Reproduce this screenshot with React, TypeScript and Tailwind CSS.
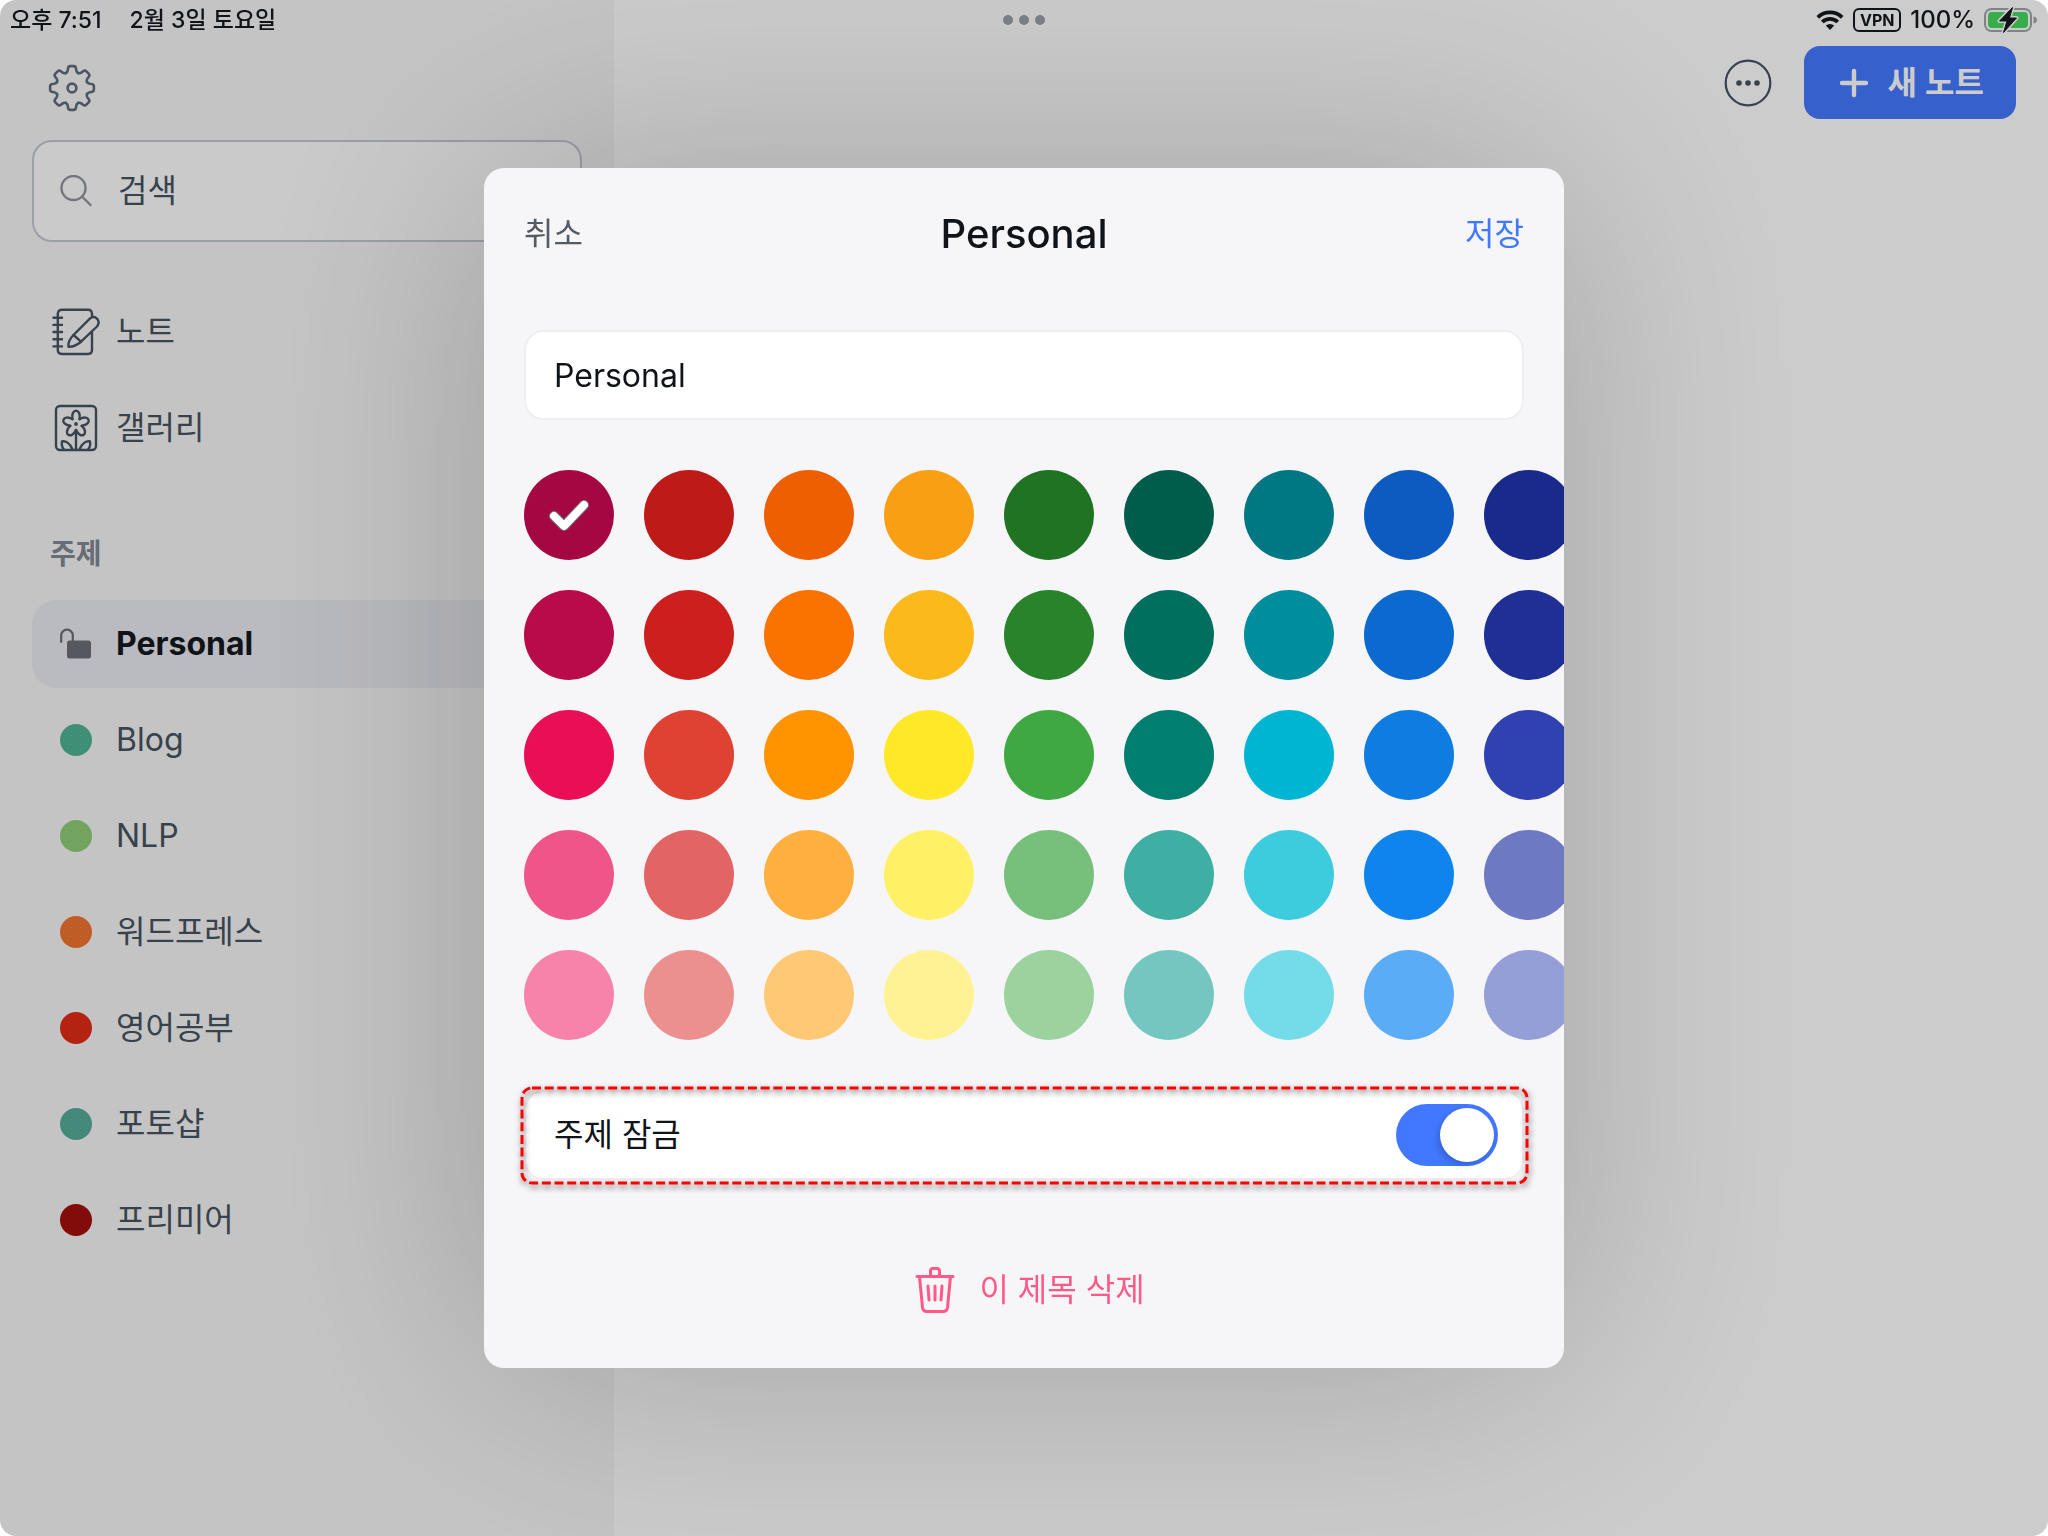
import { useState } from "react";

const swatches = [
  "bg-[#a50743]", "bg-[#bd1a18]", "bg-[#ed5f00]", "bg-[#f99f14]", "bg-[#1f7322]", "bg-[#005d4c]", "bg-[#007883]", "bg-[#0d5bc0]", "bg-[#1a2a8c]",
  "bg-[#b90a49]", "bg-[#cd1f1d]", "bg-[#f87300]", "bg-[#fbb91c]", "bg-[#28832a]", "bg-[#006f5e]", "bg-[#008d9e]", "bg-[#0b69cf]", "bg-[#1f2f95]",
  "bg-[#e80f56]", "bg-[#df4132]", "bg-[#ff9300]", "bg-[#ffe828]", "bg-[#3fa843]", "bg-[#007f70]", "bg-[#00b5d2]", "bg-[#0f7ce2]", "bg-[#3042af]",
  "bg-[#f0558a]", "bg-[#e26465]", "bg-[#ffb03f]", "bg-[#fff066]", "bg-[#77c07b]", "bg-[#3fafa3]", "bg-[#3dcbde]", "bg-[#1084ee]", "bg-[#6d7ac3]",
  "bg-[#f783aa]", "bg-[#ec908f]", "bg-[#ffc874]", "bg-[#fff293]", "bg-[#9bd29e]", "bg-[#74c7c0]", "bg-[#73dce8]", "bg-[#5aacf7]", "bg-[#949fd7]",
];

const topics = [
  { name: "Blog", dot: "bg-[#4fb394]" },
  { name: "NLP", dot: "bg-[#8fcd77]" },
  { name: "워드프레스", dot: "bg-[#f07330]" },
  { name: "영어공부", dot: "bg-[#e22c16]" },
  { name: "포토샵", dot: "bg-[#56ab98]" },
  { name: "프리미어", dot: "bg-[#a3100c]" },
];

function GearIcon() {
  return (
    <svg className="w-12 h-12" viewBox="-24 -24 48 48" fill="none" stroke="currentColor" strokeWidth="2.6" strokeLinecap="round">
      {[0, 45, 90, 135, 180, 225, 270, 315].map((a) => (
        <path
          key={a}
          transform={`rotate(${a})`}
          d="M-6.2 -14.9C-4.8 -15.6 -4.4 -16.6 -4.2 -17.9L-4 -19.6Q-3.7 -21.9 -1.6 -21.9H1.6Q3.7 -21.9 4 -19.6L4.2 -17.9C4.4 -16.6 4.8 -15.6 6.2 -14.9"
        />
      ))}
      <circle r="4.4" />
    </svg>
  );
}

function NoteIcon() {
  return (
    <svg className="w-12 h-12" viewBox="0 0 48 48" fill="none" stroke="currentColor" strokeWidth="2.4" strokeLinecap="round" strokeLinejoin="round">
      <path d="M40 8.5V6Q40 1.8 36 1.8H10Q5.8 1.8 5.8 6V42Q5.8 46 10 46H36Q40 46 40 42V24.5" />
      <path d="M1.5 9.7H10M1.5 16.9H10M1.5 24H10M1.5 31.2H10M1.5 38.4H10" />
      <path d="M21.5 27L37.8 10.6Q41.8 7.3 45.2 10.8Q48.2 14.7 45 18.5L29 33.7Z" />
      <path d="M21.5 27C18 30.5 16 35 16.5 38.7C20 39 25 37 29 33.7" />
    </svg>
  );
}

function GalleryIcon() {
  return (
    <svg className="w-12 h-12" viewBox="0 0 48 48" fill="none" stroke="currentColor" strokeWidth="2.4" strokeLinecap="round" strokeLinejoin="round">
      <rect x="4" y="2" width="40" height="44" rx="4" />
      <g transform="translate(24 20)">
        {[0, 72, 144, 216, 288].map((a) => (
          <path key={a} transform={`rotate(${a})`} d="M-3.5 -4.9C-5.8 -16 5.8 -16 3.5 -4.9" />
        ))}
        <circle r="1.9" fill="currentColor" stroke="none" />
      </g>
      <path d="M24 26V45" />
      <path d="M20.5 45.5C18.5 39.5 13.5 36.5 10 37.5C9.4 41 10 43.5 12 45.5" />
      <path d="M27.5 45.5C29.5 39.5 34.5 36.5 38 37.5C38.6 41 38 43.5 36 45.5" />
    </svg>
  );
}

function UnlockIcon() {
  return (
    <svg className="w-8 h-8" viewBox="0 0 32 32" fill="none">
      <path d="M1.2 14V7.5a5.8 5.8 0 0 1 11.6 0V14" stroke="currentColor" strokeWidth="2.2" strokeLinecap="round" />
      <rect x="7" y="12.5" width="24" height="18" rx="2.5" fill="currentColor" />
    </svg>
  );
}

function TrashIcon() {
  return (
    <svg className="w-12 h-12" viewBox="0 0 48 48" fill="none" stroke="currentColor" strokeWidth="3" strokeLinecap="round" strokeLinejoin="round">
      <path d="M6 10.5H42" />
      <path d="M19.5 10.5V5Q19.5 2.500 22 2.500H26Q28.500 2.500 28.500 5V10.5" />
      <path d="M8.5 10.5L11.500 41.500Q12 45.500 16 45.500H32Q36 45.500 36.500 41.500L39.500 10.5" />
      <path d="M17 20L18 34M24 20V34M31 20L30 34" />
    </svg>
  );
}

function StatusBar() {
  return (
    <header className="fixed inset-x-0 top-0 z-20 grid grid-cols-3 items-center h-10 px-[10px] text-[#101418]">
      <div className="flex gap-7 text-[23px] font-medium">
        <span>오후 7:51</span>
        <span>2월 3일 토요일</span>
      </div>
      <div className="flex justify-center gap-[6px]">
        <span className="size-[10px] rounded-full bg-[#7b7f84]" />
        <span className="size-[10px] rounded-full bg-[#7b7f84]" />
        <span className="size-[10px] rounded-full bg-[#7b7f84]" />
      </div>
      <div className="flex items-center justify-end gap-[9px]">
        <svg className="w-7 h-5" viewBox="0 0 28 20" fill="none" stroke="currentColor" strokeWidth="3.8">
          <path d="M1.8 7.4A17.5 17.5 0 0 1 26.2 7.4" />
          <path d="M6.3 12A11 11 0 0 1 21.7 12" />
          <path d="M14 20L9.8 15.6A6 6 0 0 1 18.2 15.6Z" fill="currentColor" stroke="none" />
        </svg>
        <span className="flex items-center justify-center w-12 h-6 rounded-md border-2 border-current text-base font-bold">VPN</span>
        <span className="text-2xl font-medium">100%</span>
        <svg className="w-[54px] h-7" viewBox="0 0 54 28">
          <rect x="1" y="3" width="46" height="22" rx="6.5" fill="none" stroke="#808387" strokeWidth="2" />
          <rect x="4" y="6" width="40" height="16" rx="4" fill="#38ad4b" />
          <path d="M49.5 10.5Q53 11.5 53 14T49.5 17.5Z" fill="#808387" />
          <path d="M28.5 1.5L15.500 15H23L19.5 26.5L32.500 12H25.500Z" fill="#101418" stroke="#cbcbcb" strokeWidth="4" strokeLinejoin="round" />
          <path d="M28.5 1.5L15.500 15H23L19.5 26.5L32.500 12H25.500Z" fill="#101418" stroke="#101418" strokeWidth="1" strokeLinejoin="round" />
        </svg>
      </div>
    </header>
  );
}

function Sidebar() {
  return (
    <aside className="w-[30%] shrink-0 bg-[#f6f6f6] px-8 pt-16 text-[#475361] text-[32px]">
      <button aria-label="설정" className="block ml-4 text-[#616b78]">
        <GearIcon />
      </button>
      <label className="mt-7 flex items-center h-[102px] rounded-[20px] border-2 border-[#c3c8d0] bg-[#fdfdfd] pl-[26px]">
        <svg className="w-8 h-8 text-[#90959d]" viewBox="0 0 32 32" fill="none" stroke="currentColor" strokeWidth="2.4" strokeLinecap="round">
          <circle cx="13.5" cy="13" r="12" />
          <path d="M22 21.500L30.500 30" />
        </svg>
        <input type="search" aria-label="검색" placeholder="검색" className="ml-[26px] w-80 bg-transparent outline-none placeholder:text-[#475361]" />
      </label>
      <nav className="mt-[42px]">
        <a href="#notes" className="flex items-center h-24 gap-4 pl-5">
          <NoteIcon />노트
        </a>
        <a href="#gallery" className="flex items-center h-24 gap-4 pl-5">
          <GalleryIcon />갤러리
        </a>
      </nav>
      <h2 className="mt-[58px] pl-[18px] text-[28px] leading-10 font-bold text-[#828791]">주제</h2>
      <nav className="mt-[26px] flex flex-col gap-2">
        <a href="#personal" className="flex items-center h-[88px] gap-4 pl-5 rounded-3xl bg-[#e9eaf0] font-bold text-[#14181d]">
          <span className="flex w-12 justify-center text-[#6b7077]">
            <UnlockIcon />
          </span>
          Personal
        </a>
        {topics.map((t) => (
          <a key={t.name} href={`#${t.name}`} className="flex items-center h-[88px] gap-4 pl-5">
            <span className="flex w-12 justify-center">
              <span className={`size-8 rounded-full ${t.dot}`} />
            </span>
            {t.name}
          </a>
        ))}
      </nav>
    </aside>
  );
}

function TopicDialog() {
  const [name, setName] = useState("Personal");
  const [color, setColor] = useState(0);
  const [locked, setLocked] = useState(true);

  return (
    <div role="dialog" aria-label="Personal" className="w-[1080px] max-w-full overflow-hidden rounded-[20px] bg-[#f6f6f9] px-10 pt-[38px] pb-[54px] text-[32px] shadow-[0_0_280px_rgba(0,0,0,0.21)]">
      <div className="flex items-center justify-between h-14">
        <button className="text-[#555b64]">취소</button>
        <h1 className="text-[40px] font-medium text-[#101418]">Personal</h1>
        <button className="text-[#4178ff]">저장</button>
      </div>

      <input
        type="text"
        aria-label="제목"
        value={name}
        onChange={(e) => setName(e.target.value)}
        className="mt-[68px] block w-full h-[90px] rounded-[20px] border-2 border-[#efeff1] bg-white px-7 text-[#101418] outline-none"
      />

      {/* Colors, scrolls off the right edge */}
      <div className="mt-[50px] -mr-10 grid grid-cols-[repeat(9,90px)] gap-[30px] overflow-hidden">
        {swatches.map((c, i) => (
          <label key={c} className={`grid place-items-center size-[90px] rounded-full ${c}`}>
            <input type="radio" name="color" aria-label={`색상 ${i + 1}`} checked={color === i} onChange={() => setColor(i)} className="sr-only" />
            {color === i && (
              <svg className="w-12 h-12" viewBox="0 0 48 48" fill="none" strokeLinecap="round" strokeLinejoin="round">
                <path d="M9 25L19 35L39 14" stroke="#6f6f74" strokeWidth="10" />
                <path d="M9 25L19 35L39 14" stroke="#fff" strokeWidth="8" />
              </svg>
            )}
          </label>
        ))}
      </div>

      <div className="relative mt-[50px]">
        <label className="flex items-center justify-between h-[90px] rounded-[20px] border-2 border-[#efeff1] bg-white pl-7 pr-6 text-[#101418]">
          주제 잠금
          <input type="checkbox" role="switch" checked={locked} onChange={(e) => setLocked(e.target.checked)} className="peer sr-only" />
          <span className="flex items-center justify-start w-[102px] h-[62px] rounded-full bg-[#d5d7dc] p-1 peer-checked:justify-end peer-checked:bg-[#4178ff]">
            <span className="size-[54px] rounded-full bg-white shadow-[-2px_3px_6px_rgba(0,0,0,0.2)]" />
          </span>
        </label>
        <svg className="pointer-events-none absolute -left-[2px] -top-[2px] h-[95px] w-[calc(100%+5px)] overflow-visible drop-shadow-[1px_3px_3px_rgba(0,0,0,0.6)]" fill="none">
          <rect width="100%" height="100%" rx="10" stroke="#ff0000" strokeWidth="3" strokeDasharray="9 3.7" />
        </svg>
      </div>

      <button className="mx-auto mt-[86px] flex items-center gap-5 pl-2 text-[#ff5a87]">
        <TrashIcon />이 제목 삭제
      </button>
    </div>
  );
}

export default function App() {
  return (
    <div className="min-h-screen bg-white font-['Inter','Noto_Sans_CJK_KR',sans-serif]">
      <StatusBar />
      <div className="flex min-h-screen overflow-hidden rounded-2xl">
        <Sidebar />
        <main className="flex-1 bg-white px-8 pt-[46px]">
          <div className="flex items-center justify-end gap-8">
            <button aria-label="더 보기" className="text-[#475361]">
              <svg className="w-12 h-12" viewBox="0 0 48 48" fill="none">
                <circle cx="24" cy="24" r="22.3" stroke="currentColor" strokeWidth="2.2" />
                <circle cx="15" cy="24" r="2.8" fill="currentColor" />
                <circle cx="24" cy="24" r="2.8" fill="currentColor" />
                <circle cx="33" cy="24" r="2.8" fill="currentColor" />
              </svg>
            </button>
            <button className="flex items-center gap-[18px] h-[73px] rounded-2xl bg-[#4478ff] pl-[34px] pr-8 text-[32px] font-semibold text-white">
              <svg className="w-8 h-8" viewBox="0 0 32 32" stroke="currentColor" strokeWidth="4.4" strokeLinecap="round">
                <path d="M16 4V28M4 16H28" />
              </svg>
              새 노트
            </button>
          </div>
        </main>
      </div>
      <div className="fixed inset-0 z-10 flex items-center justify-center overflow-hidden rounded-2xl bg-black/20">
        <TopicDialog />
      </div>
    </div>
  );
}
